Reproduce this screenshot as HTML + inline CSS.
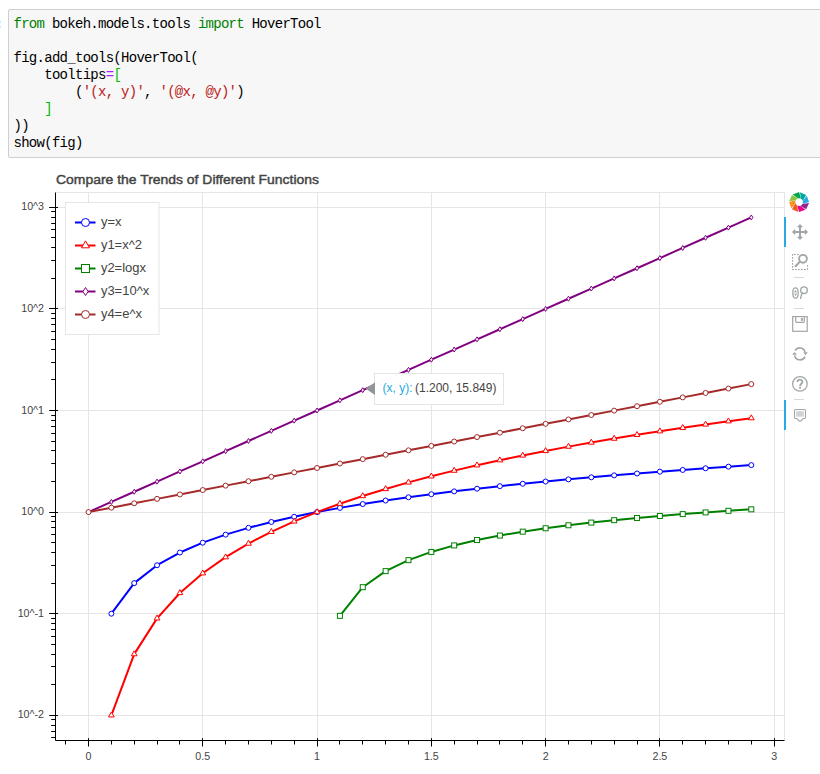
<!DOCTYPE html>
<html><head><meta charset="utf-8"><style>
html,body{margin:0;padding:0;background:#fff;width:820px;height:774px;overflow:hidden;position:relative}
.cell{position:absolute;left:8px;top:9px;width:830px;height:147px;background:#f7f7f7;border:1px solid #cfcfcf;border-radius:2px}
pre{position:absolute;left:13.5px;top:16.4px;margin:0;font-family:"Liberation Mono",monospace;font-size:14px;letter-spacing:-0.72px;line-height:17px;color:#000}
.k{color:#008000}
.o{color:#aa22ff}
.s{color:#ba2121}
.b{color:#00bb00}
.prompt{position:absolute;left:0;top:21px;width:1px;height:2px;background:#b4f6ff}
.prompt2{position:absolute;left:0;top:26px;width:1px;height:2px;background:#b4f6ff}
svg{position:absolute;left:0;top:0}
</style></head><body>
<div class="cell"></div>
<div class="prompt"></div><div class="prompt2"></div>
<pre><span class="k">from</span> bokeh.models.tools <span class="k">import</span> HoverTool

fig.add_tools(HoverTool(
    tooltips<span class="o">=</span><span class="b">[</span>
        (<span class="s">'(x, y)'</span>, <span class="s">'(@x, @y)'</span>)
    <span class="b">]</span>
))
show(fig)</pre>
<svg width="820" height="774" viewBox="0 0 820 774">
<rect x="55.5" y="192.5" width="729.0" height="548.0" fill="none" stroke="#e5e5e5" stroke-width="1"/>
<line x1="88.50" y1="192.5" x2="88.50" y2="740.5" stroke="#e5e5e5"/>
<line x1="202.50" y1="192.5" x2="202.50" y2="740.5" stroke="#e5e5e5"/>
<line x1="317.50" y1="192.5" x2="317.50" y2="740.5" stroke="#e5e5e5"/>
<line x1="431.50" y1="192.5" x2="431.50" y2="740.5" stroke="#e5e5e5"/>
<line x1="545.50" y1="192.5" x2="545.50" y2="740.5" stroke="#e5e5e5"/>
<line x1="659.50" y1="192.5" x2="659.50" y2="740.5" stroke="#e5e5e5"/>
<line x1="774.50" y1="192.5" x2="774.50" y2="740.5" stroke="#e5e5e5"/>
<line x1="55.5" y1="715.50" x2="784.5" y2="715.50" stroke="#e5e5e5"/>
<line x1="55.5" y1="613.50" x2="784.5" y2="613.50" stroke="#e5e5e5"/>
<line x1="55.5" y1="512.50" x2="784.5" y2="512.50" stroke="#e5e5e5"/>
<line x1="55.5" y1="410.50" x2="784.5" y2="410.50" stroke="#e5e5e5"/>
<line x1="55.5" y1="308.50" x2="784.5" y2="308.50" stroke="#e5e5e5"/>
<line x1="55.5" y1="207.50" x2="784.5" y2="207.50" stroke="#e5e5e5"/>
<polyline fill="none" stroke="#0000ff" stroke-width="2" stroke-linejoin="round" points="111.36,613.70 134.21,583.12 157.06,565.22 179.92,552.53 202.78,542.68 225.63,534.64 248.48,527.84 271.34,521.95 294.20,516.75 317.05,512.10 339.91,507.89 362.76,504.06 385.62,500.52 408.47,497.25 431.33,494.21 454.18,491.36 477.04,488.69 499.89,486.16 522.75,483.78 545.60,481.52 568.46,479.36 591.31,477.31 614.16,475.35 637.02,473.47 659.88,471.67 682.73,469.94 705.59,468.27 728.44,466.67 751.29,465.12"/>
<circle cx="111.36" cy="613.70" r="2.5" fill="#fff" stroke="#0000ff" stroke-width="1"/>
<circle cx="134.21" cy="583.12" r="2.5" fill="#fff" stroke="#0000ff" stroke-width="1"/>
<circle cx="157.06" cy="565.22" r="2.5" fill="#fff" stroke="#0000ff" stroke-width="1"/>
<circle cx="179.92" cy="552.53" r="2.5" fill="#fff" stroke="#0000ff" stroke-width="1"/>
<circle cx="202.78" cy="542.68" r="2.5" fill="#fff" stroke="#0000ff" stroke-width="1"/>
<circle cx="225.63" cy="534.64" r="2.5" fill="#fff" stroke="#0000ff" stroke-width="1"/>
<circle cx="248.48" cy="527.84" r="2.5" fill="#fff" stroke="#0000ff" stroke-width="1"/>
<circle cx="271.34" cy="521.95" r="2.5" fill="#fff" stroke="#0000ff" stroke-width="1"/>
<circle cx="294.20" cy="516.75" r="2.5" fill="#fff" stroke="#0000ff" stroke-width="1"/>
<circle cx="317.05" cy="512.10" r="2.5" fill="#fff" stroke="#0000ff" stroke-width="1"/>
<circle cx="339.91" cy="507.89" r="2.5" fill="#fff" stroke="#0000ff" stroke-width="1"/>
<circle cx="362.76" cy="504.06" r="2.5" fill="#fff" stroke="#0000ff" stroke-width="1"/>
<circle cx="385.62" cy="500.52" r="2.5" fill="#fff" stroke="#0000ff" stroke-width="1"/>
<circle cx="408.47" cy="497.25" r="2.5" fill="#fff" stroke="#0000ff" stroke-width="1"/>
<circle cx="431.33" cy="494.21" r="2.5" fill="#fff" stroke="#0000ff" stroke-width="1"/>
<circle cx="454.18" cy="491.36" r="2.5" fill="#fff" stroke="#0000ff" stroke-width="1"/>
<circle cx="477.04" cy="488.69" r="2.5" fill="#fff" stroke="#0000ff" stroke-width="1"/>
<circle cx="499.89" cy="486.16" r="2.5" fill="#fff" stroke="#0000ff" stroke-width="1"/>
<circle cx="522.75" cy="483.78" r="2.5" fill="#fff" stroke="#0000ff" stroke-width="1"/>
<circle cx="545.60" cy="481.52" r="2.5" fill="#fff" stroke="#0000ff" stroke-width="1"/>
<circle cx="568.46" cy="479.36" r="2.5" fill="#fff" stroke="#0000ff" stroke-width="1"/>
<circle cx="591.31" cy="477.31" r="2.5" fill="#fff" stroke="#0000ff" stroke-width="1"/>
<circle cx="614.16" cy="475.35" r="2.5" fill="#fff" stroke="#0000ff" stroke-width="1"/>
<circle cx="637.02" cy="473.47" r="2.5" fill="#fff" stroke="#0000ff" stroke-width="1"/>
<circle cx="659.88" cy="471.67" r="2.5" fill="#fff" stroke="#0000ff" stroke-width="1"/>
<circle cx="682.73" cy="469.94" r="2.5" fill="#fff" stroke="#0000ff" stroke-width="1"/>
<circle cx="705.59" cy="468.27" r="2.5" fill="#fff" stroke="#0000ff" stroke-width="1"/>
<circle cx="728.44" cy="466.67" r="2.5" fill="#fff" stroke="#0000ff" stroke-width="1"/>
<circle cx="751.29" cy="465.12" r="2.5" fill="#fff" stroke="#0000ff" stroke-width="1"/>
<polyline fill="none" stroke="#ff0000" stroke-width="2" stroke-linejoin="round" points="111.36,715.30 134.21,654.13 157.06,618.35 179.92,592.96 202.78,573.27 225.63,557.18 248.48,543.58 271.34,531.79 294.20,521.40 317.05,512.10 339.91,503.69 362.76,496.01 385.62,488.95 408.47,482.41 431.33,476.32 454.18,470.62 477.04,465.27 499.89,460.23 522.75,455.46 545.60,450.93 568.46,446.63 591.31,442.52 614.16,438.60 637.02,434.84 659.88,431.24 682.73,427.78 705.59,424.45 728.44,421.24 751.29,418.14"/>
<polygon points="111.36,711.98 114.23,716.96 108.48,716.96" fill="#fff" stroke="#ff0000" stroke-width="1"/>
<polygon points="134.21,650.81 137.09,655.79 131.34,655.79" fill="#fff" stroke="#ff0000" stroke-width="1"/>
<polygon points="157.06,615.03 159.94,620.01 154.19,620.01" fill="#fff" stroke="#ff0000" stroke-width="1"/>
<polygon points="179.92,589.64 182.80,594.62 177.05,594.62" fill="#fff" stroke="#ff0000" stroke-width="1"/>
<polygon points="202.78,569.95 205.65,574.93 199.90,574.93" fill="#fff" stroke="#ff0000" stroke-width="1"/>
<polygon points="225.63,553.86 228.50,558.84 222.75,558.84" fill="#fff" stroke="#ff0000" stroke-width="1"/>
<polygon points="248.48,540.26 251.36,545.24 245.61,545.24" fill="#fff" stroke="#ff0000" stroke-width="1"/>
<polygon points="271.34,528.47 274.22,533.45 268.47,533.45" fill="#fff" stroke="#ff0000" stroke-width="1"/>
<polygon points="294.20,518.08 297.07,523.06 291.32,523.06" fill="#fff" stroke="#ff0000" stroke-width="1"/>
<polygon points="317.05,508.78 319.93,513.76 314.18,513.76" fill="#fff" stroke="#ff0000" stroke-width="1"/>
<polygon points="339.91,500.37 342.78,505.35 337.03,505.35" fill="#fff" stroke="#ff0000" stroke-width="1"/>
<polygon points="362.76,492.69 365.63,497.67 359.88,497.67" fill="#fff" stroke="#ff0000" stroke-width="1"/>
<polygon points="385.62,485.63 388.49,490.61 382.74,490.61" fill="#fff" stroke="#ff0000" stroke-width="1"/>
<polygon points="408.47,479.09 411.34,484.07 405.59,484.07" fill="#fff" stroke="#ff0000" stroke-width="1"/>
<polygon points="431.33,473.00 434.20,477.98 428.45,477.98" fill="#fff" stroke="#ff0000" stroke-width="1"/>
<polygon points="454.18,467.30 457.06,472.28 451.31,472.28" fill="#fff" stroke="#ff0000" stroke-width="1"/>
<polygon points="477.04,461.95 479.91,466.93 474.16,466.93" fill="#fff" stroke="#ff0000" stroke-width="1"/>
<polygon points="499.89,456.91 502.77,461.89 497.02,461.89" fill="#fff" stroke="#ff0000" stroke-width="1"/>
<polygon points="522.75,452.14 525.62,457.12 519.87,457.12" fill="#fff" stroke="#ff0000" stroke-width="1"/>
<polygon points="545.60,447.61 548.48,452.59 542.73,452.59" fill="#fff" stroke="#ff0000" stroke-width="1"/>
<polygon points="568.46,443.31 571.33,448.28 565.58,448.28" fill="#fff" stroke="#ff0000" stroke-width="1"/>
<polygon points="591.31,439.20 594.19,444.18 588.44,444.18" fill="#fff" stroke="#ff0000" stroke-width="1"/>
<polygon points="614.16,435.28 617.04,440.26 611.29,440.26" fill="#fff" stroke="#ff0000" stroke-width="1"/>
<polygon points="637.02,431.52 639.89,436.50 634.14,436.50" fill="#fff" stroke="#ff0000" stroke-width="1"/>
<polygon points="659.88,427.92 662.75,432.90 657.00,432.90" fill="#fff" stroke="#ff0000" stroke-width="1"/>
<polygon points="682.73,424.46 685.61,429.44 679.86,429.44" fill="#fff" stroke="#ff0000" stroke-width="1"/>
<polygon points="705.59,421.13 708.46,426.11 702.71,426.11" fill="#fff" stroke="#ff0000" stroke-width="1"/>
<polygon points="728.44,417.92 731.31,422.90 725.56,422.90" fill="#fff" stroke="#ff0000" stroke-width="1"/>
<polygon points="751.29,414.82 754.17,419.80 748.42,419.80" fill="#fff" stroke="#ff0000" stroke-width="1"/>
<polyline fill="none" stroke="#008000" stroke-width="2" stroke-linejoin="round" points="339.91,615.82 362.76,587.20 385.62,571.14 408.47,560.16 431.33,551.93 454.18,545.41 477.04,540.06 499.89,535.55 522.75,531.66 545.60,528.27 568.46,525.27 591.31,522.59 614.16,520.17 637.02,517.97 659.88,515.96 682.73,514.11 705.59,512.40 728.44,510.81 751.29,509.33"/>
<rect x="337.41" y="613.32" width="5" height="5" fill="#fff" stroke="#008000" stroke-width="1"/>
<rect x="360.26" y="584.70" width="5" height="5" fill="#fff" stroke="#008000" stroke-width="1"/>
<rect x="383.12" y="568.64" width="5" height="5" fill="#fff" stroke="#008000" stroke-width="1"/>
<rect x="405.97" y="557.66" width="5" height="5" fill="#fff" stroke="#008000" stroke-width="1"/>
<rect x="428.83" y="549.43" width="5" height="5" fill="#fff" stroke="#008000" stroke-width="1"/>
<rect x="451.68" y="542.91" width="5" height="5" fill="#fff" stroke="#008000" stroke-width="1"/>
<rect x="474.54" y="537.56" width="5" height="5" fill="#fff" stroke="#008000" stroke-width="1"/>
<rect x="497.39" y="533.05" width="5" height="5" fill="#fff" stroke="#008000" stroke-width="1"/>
<rect x="520.25" y="529.16" width="5" height="5" fill="#fff" stroke="#008000" stroke-width="1"/>
<rect x="543.10" y="525.77" width="5" height="5" fill="#fff" stroke="#008000" stroke-width="1"/>
<rect x="565.96" y="522.77" width="5" height="5" fill="#fff" stroke="#008000" stroke-width="1"/>
<rect x="588.81" y="520.09" width="5" height="5" fill="#fff" stroke="#008000" stroke-width="1"/>
<rect x="611.66" y="517.67" width="5" height="5" fill="#fff" stroke="#008000" stroke-width="1"/>
<rect x="634.52" y="515.47" width="5" height="5" fill="#fff" stroke="#008000" stroke-width="1"/>
<rect x="657.38" y="513.46" width="5" height="5" fill="#fff" stroke="#008000" stroke-width="1"/>
<rect x="680.23" y="511.61" width="5" height="5" fill="#fff" stroke="#008000" stroke-width="1"/>
<rect x="703.09" y="509.90" width="5" height="5" fill="#fff" stroke="#008000" stroke-width="1"/>
<rect x="725.94" y="508.31" width="5" height="5" fill="#fff" stroke="#008000" stroke-width="1"/>
<rect x="748.79" y="506.83" width="5" height="5" fill="#fff" stroke="#008000" stroke-width="1"/>
<polyline fill="none" stroke="#800080" stroke-width="2" stroke-linejoin="round" points="88.50,512.10 111.36,501.94 134.21,491.78 157.06,481.62 179.92,471.46 202.78,461.30 225.63,451.14 248.48,440.98 271.34,430.82 294.20,420.66 317.05,410.50 339.91,400.34 362.76,390.18 385.62,380.02 408.47,369.86 431.33,359.70 454.18,349.54 477.04,339.38 499.89,329.22 522.75,319.06 545.60,308.90 568.46,298.74 591.31,288.58 614.16,278.42 637.02,268.26 659.88,258.10 682.73,247.94 705.59,237.78 728.44,227.62 751.29,217.46"/>
<polygon points="88.50,509.60 90.12,512.10 88.50,514.60 86.88,512.10" fill="#fff" stroke="#800080" stroke-width="1"/>
<polygon points="111.36,499.44 112.98,501.94 111.36,504.44 109.73,501.94" fill="#fff" stroke="#800080" stroke-width="1"/>
<polygon points="134.21,489.28 135.84,491.78 134.21,494.28 132.59,491.78" fill="#fff" stroke="#800080" stroke-width="1"/>
<polygon points="157.06,479.12 158.69,481.62 157.06,484.12 155.44,481.62" fill="#fff" stroke="#800080" stroke-width="1"/>
<polygon points="179.92,468.96 181.55,471.46 179.92,473.96 178.30,471.46" fill="#fff" stroke="#800080" stroke-width="1"/>
<polygon points="202.78,458.80 204.40,461.30 202.78,463.80 201.15,461.30" fill="#fff" stroke="#800080" stroke-width="1"/>
<polygon points="225.63,448.64 227.25,451.14 225.63,453.64 224.00,451.14" fill="#fff" stroke="#800080" stroke-width="1"/>
<polygon points="248.48,438.48 250.11,440.98 248.48,443.48 246.86,440.98" fill="#fff" stroke="#800080" stroke-width="1"/>
<polygon points="271.34,428.32 272.97,430.82 271.34,433.32 269.72,430.82" fill="#fff" stroke="#800080" stroke-width="1"/>
<polygon points="294.20,418.16 295.82,420.66 294.20,423.16 292.57,420.66" fill="#fff" stroke="#800080" stroke-width="1"/>
<polygon points="317.05,408.00 318.68,410.50 317.05,413.00 315.43,410.50" fill="#fff" stroke="#800080" stroke-width="1"/>
<polygon points="339.91,397.84 341.53,400.34 339.91,402.84 338.28,400.34" fill="#fff" stroke="#800080" stroke-width="1"/>
<polygon points="362.76,387.68 364.38,390.18 362.76,392.68 361.13,390.18" fill="#fff" stroke="#800080" stroke-width="1"/>
<polygon points="385.62,377.52 387.24,380.02 385.62,382.52 383.99,380.02" fill="#fff" stroke="#800080" stroke-width="1"/>
<polygon points="408.47,367.36 410.09,369.86 408.47,372.36 406.84,369.86" fill="#fff" stroke="#800080" stroke-width="1"/>
<polygon points="431.33,357.20 432.95,359.70 431.33,362.20 429.70,359.70" fill="#fff" stroke="#800080" stroke-width="1"/>
<polygon points="454.18,347.04 455.81,349.54 454.18,352.04 452.56,349.54" fill="#fff" stroke="#800080" stroke-width="1"/>
<polygon points="477.04,336.88 478.66,339.38 477.04,341.88 475.41,339.38" fill="#fff" stroke="#800080" stroke-width="1"/>
<polygon points="499.89,326.72 501.52,329.22 499.89,331.72 498.27,329.22" fill="#fff" stroke="#800080" stroke-width="1"/>
<polygon points="522.75,316.56 524.37,319.06 522.75,321.56 521.12,319.06" fill="#fff" stroke="#800080" stroke-width="1"/>
<polygon points="545.60,306.40 547.23,308.90 545.60,311.40 543.98,308.90" fill="#fff" stroke="#800080" stroke-width="1"/>
<polygon points="568.46,296.24 570.08,298.74 568.46,301.24 566.83,298.74" fill="#fff" stroke="#800080" stroke-width="1"/>
<polygon points="591.31,286.08 592.94,288.58 591.31,291.08 589.69,288.58" fill="#fff" stroke="#800080" stroke-width="1"/>
<polygon points="614.16,275.92 615.79,278.42 614.16,280.92 612.54,278.42" fill="#fff" stroke="#800080" stroke-width="1"/>
<polygon points="637.02,265.76 638.64,268.26 637.02,270.76 635.39,268.26" fill="#fff" stroke="#800080" stroke-width="1"/>
<polygon points="659.88,255.60 661.50,258.10 659.88,260.60 658.25,258.10" fill="#fff" stroke="#800080" stroke-width="1"/>
<polygon points="682.73,245.44 684.36,247.94 682.73,250.44 681.11,247.94" fill="#fff" stroke="#800080" stroke-width="1"/>
<polygon points="705.59,235.28 707.21,237.78 705.59,240.28 703.96,237.78" fill="#fff" stroke="#800080" stroke-width="1"/>
<polygon points="728.44,225.12 730.06,227.62 728.44,230.12 726.81,227.62" fill="#fff" stroke="#800080" stroke-width="1"/>
<polygon points="751.29,214.96 752.92,217.46 751.29,219.96 749.67,217.46" fill="#fff" stroke="#800080" stroke-width="1"/>
<polyline fill="none" stroke="#a52a2a" stroke-width="2" stroke-linejoin="round" points="88.50,512.10 111.36,507.69 134.21,503.28 157.06,498.86 179.92,494.45 202.78,490.04 225.63,485.63 248.48,481.21 271.34,476.80 294.20,472.39 317.05,467.98 339.91,463.56 362.76,459.15 385.62,454.74 408.47,450.33 431.33,445.91 454.18,441.50 477.04,437.09 499.89,432.68 522.75,428.26 545.60,423.85 568.46,419.44 591.31,415.03 614.16,410.61 637.02,406.20 659.88,401.79 682.73,397.38 705.59,392.96 728.44,388.55 751.29,384.14"/>
<circle cx="88.50" cy="512.10" r="2.5" fill="#fff" stroke="#a52a2a" stroke-width="1"/>
<circle cx="111.36" cy="507.69" r="2.5" fill="#fff" stroke="#a52a2a" stroke-width="1"/>
<circle cx="134.21" cy="503.28" r="2.5" fill="#fff" stroke="#a52a2a" stroke-width="1"/>
<circle cx="157.06" cy="498.86" r="2.5" fill="#fff" stroke="#a52a2a" stroke-width="1"/>
<circle cx="179.92" cy="494.45" r="2.5" fill="#fff" stroke="#a52a2a" stroke-width="1"/>
<circle cx="202.78" cy="490.04" r="2.5" fill="#fff" stroke="#a52a2a" stroke-width="1"/>
<circle cx="225.63" cy="485.63" r="2.5" fill="#fff" stroke="#a52a2a" stroke-width="1"/>
<circle cx="248.48" cy="481.21" r="2.5" fill="#fff" stroke="#a52a2a" stroke-width="1"/>
<circle cx="271.34" cy="476.80" r="2.5" fill="#fff" stroke="#a52a2a" stroke-width="1"/>
<circle cx="294.20" cy="472.39" r="2.5" fill="#fff" stroke="#a52a2a" stroke-width="1"/>
<circle cx="317.05" cy="467.98" r="2.5" fill="#fff" stroke="#a52a2a" stroke-width="1"/>
<circle cx="339.91" cy="463.56" r="2.5" fill="#fff" stroke="#a52a2a" stroke-width="1"/>
<circle cx="362.76" cy="459.15" r="2.5" fill="#fff" stroke="#a52a2a" stroke-width="1"/>
<circle cx="385.62" cy="454.74" r="2.5" fill="#fff" stroke="#a52a2a" stroke-width="1"/>
<circle cx="408.47" cy="450.33" r="2.5" fill="#fff" stroke="#a52a2a" stroke-width="1"/>
<circle cx="431.33" cy="445.91" r="2.5" fill="#fff" stroke="#a52a2a" stroke-width="1"/>
<circle cx="454.18" cy="441.50" r="2.5" fill="#fff" stroke="#a52a2a" stroke-width="1"/>
<circle cx="477.04" cy="437.09" r="2.5" fill="#fff" stroke="#a52a2a" stroke-width="1"/>
<circle cx="499.89" cy="432.68" r="2.5" fill="#fff" stroke="#a52a2a" stroke-width="1"/>
<circle cx="522.75" cy="428.26" r="2.5" fill="#fff" stroke="#a52a2a" stroke-width="1"/>
<circle cx="545.60" cy="423.85" r="2.5" fill="#fff" stroke="#a52a2a" stroke-width="1"/>
<circle cx="568.46" cy="419.44" r="2.5" fill="#fff" stroke="#a52a2a" stroke-width="1"/>
<circle cx="591.31" cy="415.03" r="2.5" fill="#fff" stroke="#a52a2a" stroke-width="1"/>
<circle cx="614.16" cy="410.61" r="2.5" fill="#fff" stroke="#a52a2a" stroke-width="1"/>
<circle cx="637.02" cy="406.20" r="2.5" fill="#fff" stroke="#a52a2a" stroke-width="1"/>
<circle cx="659.88" cy="401.79" r="2.5" fill="#fff" stroke="#a52a2a" stroke-width="1"/>
<circle cx="682.73" cy="397.38" r="2.5" fill="#fff" stroke="#a52a2a" stroke-width="1"/>
<circle cx="705.59" cy="392.96" r="2.5" fill="#fff" stroke="#a52a2a" stroke-width="1"/>
<circle cx="728.44" cy="388.55" r="2.5" fill="#fff" stroke="#a52a2a" stroke-width="1"/>
<circle cx="751.29" cy="384.14" r="2.5" fill="#fff" stroke="#a52a2a" stroke-width="1"/>
<line x1="55.5" y1="192.5" x2="55.5" y2="740.5" stroke="#000"/>
<line x1="55.5" y1="740.5" x2="784.5" y2="740.5" stroke="#000"/>
<line x1="65.50" y1="740.5" x2="65.50" y2="744.5" stroke="#000"/>
<line x1="88.50" y1="738.2" x2="88.50" y2="746.5" stroke="#000"/>
<line x1="111.50" y1="740.5" x2="111.50" y2="744.5" stroke="#000"/>
<line x1="134.50" y1="740.5" x2="134.50" y2="744.5" stroke="#000"/>
<line x1="157.50" y1="740.5" x2="157.50" y2="744.5" stroke="#000"/>
<line x1="179.50" y1="740.5" x2="179.50" y2="744.5" stroke="#000"/>
<line x1="202.50" y1="738.2" x2="202.50" y2="746.5" stroke="#000"/>
<line x1="225.50" y1="740.5" x2="225.50" y2="744.5" stroke="#000"/>
<line x1="248.50" y1="740.5" x2="248.50" y2="744.5" stroke="#000"/>
<line x1="271.50" y1="740.5" x2="271.50" y2="744.5" stroke="#000"/>
<line x1="294.50" y1="740.5" x2="294.50" y2="744.5" stroke="#000"/>
<line x1="317.50" y1="738.2" x2="317.50" y2="746.5" stroke="#000"/>
<line x1="339.50" y1="740.5" x2="339.50" y2="744.5" stroke="#000"/>
<line x1="362.50" y1="740.5" x2="362.50" y2="744.5" stroke="#000"/>
<line x1="385.50" y1="740.5" x2="385.50" y2="744.5" stroke="#000"/>
<line x1="408.50" y1="740.5" x2="408.50" y2="744.5" stroke="#000"/>
<line x1="431.50" y1="738.2" x2="431.50" y2="746.5" stroke="#000"/>
<line x1="454.50" y1="740.5" x2="454.50" y2="744.5" stroke="#000"/>
<line x1="477.50" y1="740.5" x2="477.50" y2="744.5" stroke="#000"/>
<line x1="499.50" y1="740.5" x2="499.50" y2="744.5" stroke="#000"/>
<line x1="522.50" y1="740.5" x2="522.50" y2="744.5" stroke="#000"/>
<line x1="545.50" y1="738.2" x2="545.50" y2="746.5" stroke="#000"/>
<line x1="568.50" y1="740.5" x2="568.50" y2="744.5" stroke="#000"/>
<line x1="591.50" y1="740.5" x2="591.50" y2="744.5" stroke="#000"/>
<line x1="614.50" y1="740.5" x2="614.50" y2="744.5" stroke="#000"/>
<line x1="637.50" y1="740.5" x2="637.50" y2="744.5" stroke="#000"/>
<line x1="659.50" y1="738.2" x2="659.50" y2="746.5" stroke="#000"/>
<line x1="682.50" y1="740.5" x2="682.50" y2="744.5" stroke="#000"/>
<line x1="705.50" y1="740.5" x2="705.50" y2="744.5" stroke="#000"/>
<line x1="728.50" y1="740.5" x2="728.50" y2="744.5" stroke="#000"/>
<line x1="751.50" y1="740.5" x2="751.50" y2="744.5" stroke="#000"/>
<line x1="774.50" y1="738.2" x2="774.50" y2="746.5" stroke="#000"/>
<line x1="51.2" y1="737.50" x2="55.5" y2="737.50" stroke="#000"/>
<line x1="51.2" y1="731.50" x2="55.5" y2="731.50" stroke="#000"/>
<line x1="51.2" y1="725.50" x2="55.5" y2="725.50" stroke="#000"/>
<line x1="51.2" y1="719.50" x2="55.5" y2="719.50" stroke="#000"/>
<line x1="49.2" y1="715.50" x2="58" y2="715.50" stroke="#000"/>
<line x1="51.2" y1="684.50" x2="55.5" y2="684.50" stroke="#000"/>
<line x1="51.2" y1="666.50" x2="55.5" y2="666.50" stroke="#000"/>
<line x1="51.2" y1="654.50" x2="55.5" y2="654.50" stroke="#000"/>
<line x1="51.2" y1="644.50" x2="55.5" y2="644.50" stroke="#000"/>
<line x1="51.2" y1="636.50" x2="55.5" y2="636.50" stroke="#000"/>
<line x1="51.2" y1="629.50" x2="55.5" y2="629.50" stroke="#000"/>
<line x1="51.2" y1="623.50" x2="55.5" y2="623.50" stroke="#000"/>
<line x1="51.2" y1="618.50" x2="55.5" y2="618.50" stroke="#000"/>
<line x1="49.2" y1="613.50" x2="58" y2="613.50" stroke="#000"/>
<line x1="51.2" y1="583.50" x2="55.5" y2="583.50" stroke="#000"/>
<line x1="51.2" y1="565.50" x2="55.5" y2="565.50" stroke="#000"/>
<line x1="51.2" y1="552.50" x2="55.5" y2="552.50" stroke="#000"/>
<line x1="51.2" y1="542.50" x2="55.5" y2="542.50" stroke="#000"/>
<line x1="51.2" y1="534.50" x2="55.5" y2="534.50" stroke="#000"/>
<line x1="51.2" y1="527.50" x2="55.5" y2="527.50" stroke="#000"/>
<line x1="51.2" y1="521.50" x2="55.5" y2="521.50" stroke="#000"/>
<line x1="51.2" y1="516.50" x2="55.5" y2="516.50" stroke="#000"/>
<line x1="49.2" y1="512.50" x2="58" y2="512.50" stroke="#000"/>
<line x1="51.2" y1="481.50" x2="55.5" y2="481.50" stroke="#000"/>
<line x1="51.2" y1="463.50" x2="55.5" y2="463.50" stroke="#000"/>
<line x1="51.2" y1="450.50" x2="55.5" y2="450.50" stroke="#000"/>
<line x1="51.2" y1="441.50" x2="55.5" y2="441.50" stroke="#000"/>
<line x1="51.2" y1="433.50" x2="55.5" y2="433.50" stroke="#000"/>
<line x1="51.2" y1="426.50" x2="55.5" y2="426.50" stroke="#000"/>
<line x1="51.2" y1="420.50" x2="55.5" y2="420.50" stroke="#000"/>
<line x1="51.2" y1="415.50" x2="55.5" y2="415.50" stroke="#000"/>
<line x1="49.2" y1="410.50" x2="58" y2="410.50" stroke="#000"/>
<line x1="51.2" y1="379.50" x2="55.5" y2="379.50" stroke="#000"/>
<line x1="51.2" y1="362.50" x2="55.5" y2="362.50" stroke="#000"/>
<line x1="51.2" y1="349.50" x2="55.5" y2="349.50" stroke="#000"/>
<line x1="51.2" y1="339.50" x2="55.5" y2="339.50" stroke="#000"/>
<line x1="51.2" y1="331.50" x2="55.5" y2="331.50" stroke="#000"/>
<line x1="51.2" y1="324.50" x2="55.5" y2="324.50" stroke="#000"/>
<line x1="51.2" y1="318.50" x2="55.5" y2="318.50" stroke="#000"/>
<line x1="51.2" y1="313.50" x2="55.5" y2="313.50" stroke="#000"/>
<line x1="49.2" y1="308.50" x2="58" y2="308.50" stroke="#000"/>
<line x1="51.2" y1="278.50" x2="55.5" y2="278.50" stroke="#000"/>
<line x1="51.2" y1="260.50" x2="55.5" y2="260.50" stroke="#000"/>
<line x1="51.2" y1="247.50" x2="55.5" y2="247.50" stroke="#000"/>
<line x1="51.2" y1="237.50" x2="55.5" y2="237.50" stroke="#000"/>
<line x1="51.2" y1="229.50" x2="55.5" y2="229.50" stroke="#000"/>
<line x1="51.2" y1="223.50" x2="55.5" y2="223.50" stroke="#000"/>
<line x1="51.2" y1="217.50" x2="55.5" y2="217.50" stroke="#000"/>
<line x1="51.2" y1="211.50" x2="55.5" y2="211.50" stroke="#000"/>
<line x1="49.2" y1="207.50" x2="58" y2="207.50" stroke="#000"/>
<text x="44" y="718.30" font-family="Liberation Sans, sans-serif" font-size="10.67" fill="#444" text-anchor="end">10^-2</text>
<text x="44" y="616.70" font-family="Liberation Sans, sans-serif" font-size="10.67" fill="#444" text-anchor="end">10^-1</text>
<text x="44" y="515.10" font-family="Liberation Sans, sans-serif" font-size="10.67" fill="#444" text-anchor="end">10^0</text>
<text x="44" y="413.50" font-family="Liberation Sans, sans-serif" font-size="10.67" fill="#444" text-anchor="end">10^1</text>
<text x="44" y="311.90" font-family="Liberation Sans, sans-serif" font-size="10.67" fill="#444" text-anchor="end">10^2</text>
<text x="44" y="210.30" font-family="Liberation Sans, sans-serif" font-size="10.67" fill="#444" text-anchor="end">10^3</text>
<text x="88.50" y="759.5" font-family="Liberation Sans, sans-serif" font-size="10.67" fill="#444" text-anchor="middle">0</text>
<text x="202.78" y="759.5" font-family="Liberation Sans, sans-serif" font-size="10.67" fill="#444" text-anchor="middle">0.5</text>
<text x="317.05" y="759.5" font-family="Liberation Sans, sans-serif" font-size="10.67" fill="#444" text-anchor="middle">1</text>
<text x="431.33" y="759.5" font-family="Liberation Sans, sans-serif" font-size="10.67" fill="#444" text-anchor="middle">1.5</text>
<text x="545.60" y="759.5" font-family="Liberation Sans, sans-serif" font-size="10.67" fill="#444" text-anchor="middle">2</text>
<text x="659.88" y="759.5" font-family="Liberation Sans, sans-serif" font-size="10.67" fill="#444" text-anchor="middle">2.5</text>
<text x="774.15" y="759.5" font-family="Liberation Sans, sans-serif" font-size="10.67" fill="#444" text-anchor="middle">3</text>
<text x="56" y="184.2" font-family="Liberation Sans, sans-serif" font-size="13.33" fill="#444" stroke="#444" stroke-width="0.45" textLength="263" lengthAdjust="spacingAndGlyphs">Compare the Trends of Different Functions</text>
<rect x="65.5" y="202.5" width="93.5" height="132" fill="#fff" fill-opacity="0.95" stroke="#e5e5e5"/>
<line x1="75" y1="222.5" x2="95.5" y2="222.5" stroke="#0000ff" stroke-width="2"/>
<circle cx="85.50" cy="222.50" r="4.0" fill="#fff" stroke="#0000ff" stroke-width="1"/>
<text x="100.9" y="226.10" font-family="Liberation Sans, sans-serif" font-size="13" fill="#444">y=x</text>
<line x1="75" y1="245.5" x2="95.5" y2="245.5" stroke="#ff0000" stroke-width="2"/>
<polygon points="85.50,240.88 89.50,247.81 81.50,247.81" fill="#fff" stroke="#ff0000" stroke-width="1"/>
<text x="100.9" y="249.10" font-family="Liberation Sans, sans-serif" font-size="13" fill="#444">y1=x^2</text>
<line x1="75" y1="268.5" x2="95.5" y2="268.5" stroke="#008000" stroke-width="2"/>
<rect x="81.50" y="264.50" width="8" height="8" fill="#fff" stroke="#008000" stroke-width="1"/>
<text x="100.9" y="272.10" font-family="Liberation Sans, sans-serif" font-size="13" fill="#444">y2=logx</text>
<line x1="75" y1="291.5" x2="95.5" y2="291.5" stroke="#800080" stroke-width="2"/>
<polygon points="85.50,287.50 88.10,291.50 85.50,295.50 82.90,291.50" fill="#fff" stroke="#800080" stroke-width="1"/>
<text x="100.9" y="295.10" font-family="Liberation Sans, sans-serif" font-size="13" fill="#444">y3=10^x</text>
<line x1="75" y1="314.5" x2="95.5" y2="314.5" stroke="#a52a2a" stroke-width="2"/>
<circle cx="85.50" cy="314.50" r="4.0" fill="#fff" stroke="#a52a2a" stroke-width="1"/>
<text x="100.9" y="318.10" font-family="Liberation Sans, sans-serif" font-size="13" fill="#444">y4=e^x</text>
<rect x="374.5" y="373.5" width="129" height="31" fill="#fff" fill-opacity="0.985" stroke="#e5e5e5"/>
<polygon points="365.5,388.5 375,382.5 375,395" fill="#909599"/>
<text x="382.5" y="392.4" font-family="Liberation Sans, sans-serif" font-size="12" fill="#26aae1">(x, y):</text>
<text x="415" y="392.4" font-family="Liberation Sans, sans-serif" font-size="12" fill="#444">(1.200, 15.849)</text>
<rect x="784" y="217" width="2" height="30" fill="#26aae1"/>
<rect x="784" y="400" width="2" height="30" fill="#26aae1"/>
<polygon points="797.86,198.30 800.92,198.54 799.10,192.10 792.67,194.44" fill="#00a651"/>
<polygon points="800.92,198.54 802.90,200.86 806.17,195.03 799.97,192.14" fill="#00a99d"/>
<polygon points="802.90,200.86 802.66,203.92 809.10,202.10 806.76,195.67" fill="#29abe2"/>
<polygon points="802.66,203.92 800.34,205.90 806.17,209.17 809.06,202.97" fill="#92278f"/>
<polygon points="800.34,205.90 797.28,205.66 799.10,212.10 805.53,209.76" fill="#ec008c"/>
<polygon points="797.28,205.66 795.30,203.34 792.03,209.17 798.23,212.06" fill="#f15a24"/>
<polygon points="795.30,203.34 795.54,200.28 789.10,202.10 791.44,208.53" fill="#f7931e"/>
<polygon points="795.54,200.28 797.86,198.30 792.03,195.03 789.14,201.23" fill="#8cc63f"/>
<g fill="#a1a6a9"><rect x="793" y="231" width="14" height="2"/><rect x="799" y="225" width="2" height="14"/><polygon points="792,232 795.2,228.8 795.2,235.2"/><polygon points="808,232 804.8,228.8 804.8,235.2"/><polygon points="800,224 796.8,227.2 803.2,227.2"/><polygon points="800,240 796.8,236.8 803.2,236.8"/></g>
<g fill="#a1a6a9">
<rect x="792" y="254.0" width="1.1" height="1.7"/>
<rect x="792" y="257.0" width="1.1" height="1.7"/>
<rect x="792" y="260.0" width="1.1" height="1.7"/>
<rect x="792" y="263.0" width="1.1" height="1.7"/>
<rect x="792" y="266.0" width="1.1" height="1.7"/>
<rect x="792.0" y="269" width="1.7" height="1.1"/>
<rect x="795.0" y="269" width="1.7" height="1.1"/>
<rect x="798.0" y="269" width="1.7" height="1.1"/>
<rect x="801.0" y="269" width="1.7" height="1.1"/>
<rect x="804.0" y="269" width="1.7" height="1.1"/>
<rect x="794.0" y="254" width="1.7" height="1.1"/>
<rect x="797.0" y="254" width="1.7" height="1.1"/>
<rect x="807" y="265.0" width="1.1" height="1.7"/>
<rect x="807" y="268.0" width="1.1" height="1.7"/>
</g>
<circle cx="803" cy="258.8" r="3.9" fill="#fff" stroke="#a1a6a9" stroke-width="1.9"/>
<line x1="799.6" y1="261.9" x2="795.6" y2="266.2" stroke="#a1a6a9" stroke-width="2" stroke-linecap="round"/>
<line x1="794" y1="277.5" x2="804" y2="277.5" stroke="#d9d9d9"/>
<ellipse cx="795.5" cy="293" rx="2.7" ry="5.1" fill="none" stroke="#a1a6a9" stroke-width="1.3"/>
<polygon points="795.5,290.0 793.9,292.2 797.1,292.2" fill="#a1a6a9"/>
<polygon points="795.5,295.9 793.9,293.7 797.1,293.7" fill="#a1a6a9"/>
<line x1="794.3" y1="292.9" x2="796.7" y2="292.9" stroke="#c8cbcd" stroke-width="0.6"/>
<circle cx="804" cy="290.2" r="3.3" fill="none" stroke="#a1a6a9" stroke-width="1.4"/>
<line x1="802.0" y1="292.8" x2="800.6" y2="298.4" stroke="#a1a6a9" stroke-width="1.4" stroke-linecap="round"/>
<line x1="794" y1="308.5" x2="804" y2="308.5" stroke="#d9d9d9"/>
<rect x="792.7" y="316.6" width="14.5" height="14.7" fill="none" stroke="#a1a6a9" stroke-width="1.2"/>
<path d="M795.7,316.6 V321.2 Q795.7,322.3 796.8,322.3 H803.2 Q804.3,322.3 804.3,321.2 V316.6" fill="none" stroke="#a1a6a9" stroke-width="1.2"/>
<rect x="800.9" y="318" width="2" height="2.9" fill="#a1a6a9"/>
<path d="M795.1,350.5 A5.4,5.4 0 0 1 805.0,352.3" fill="none" stroke="#a1a6a9" stroke-width="1.6"/>
<polygon points="803.2,352.2 807.8,352.2 805.5,355.3" fill="#a1a6a9"/>
<path d="M805.0,356.6 A5.4,5.4 0 0 1 794.7,355.3" fill="none" stroke="#a1a6a9" stroke-width="1.6"/>
<polygon points="792.1,354.7 796.9,354.7 794.5,351.9" fill="#a1a6a9"/>
<circle cx="799.9" cy="383.9" r="7.3" fill="none" stroke="#a1a6a9" stroke-width="1.25"/>
<path d="M797.4,381.9 A2.5,2.3 0 1 1 801.9,383.3 Q800.1,384.4 800.1,386.0" fill="none" stroke="#a1a6a9" stroke-width="1.8"/>
<rect x="799.1" y="386.9" width="1.9" height="1.8" fill="#a1a6a9"/>
<line x1="794" y1="399.5" x2="804" y2="399.5" stroke="#d9d9d9"/>
<path d="M795.5,409.5 H804.5 Q805.5,409.5 805.5,410.5 V417.5 Q805.5,418.5 804.5,418.5 H803.2 L800,421.6 L796.8,418.5 H795.5 Q794.5,418.5 794.5,417.5 V410.5 Q794.5,409.5 795.5,409.5 Z" fill="none" stroke="#a1a6a9" stroke-width="1.1"/>
<rect x="796.2" y="411.2" width="7.6" height="5.5" fill="#d0d2d4"/>
</svg>
</body></html>
